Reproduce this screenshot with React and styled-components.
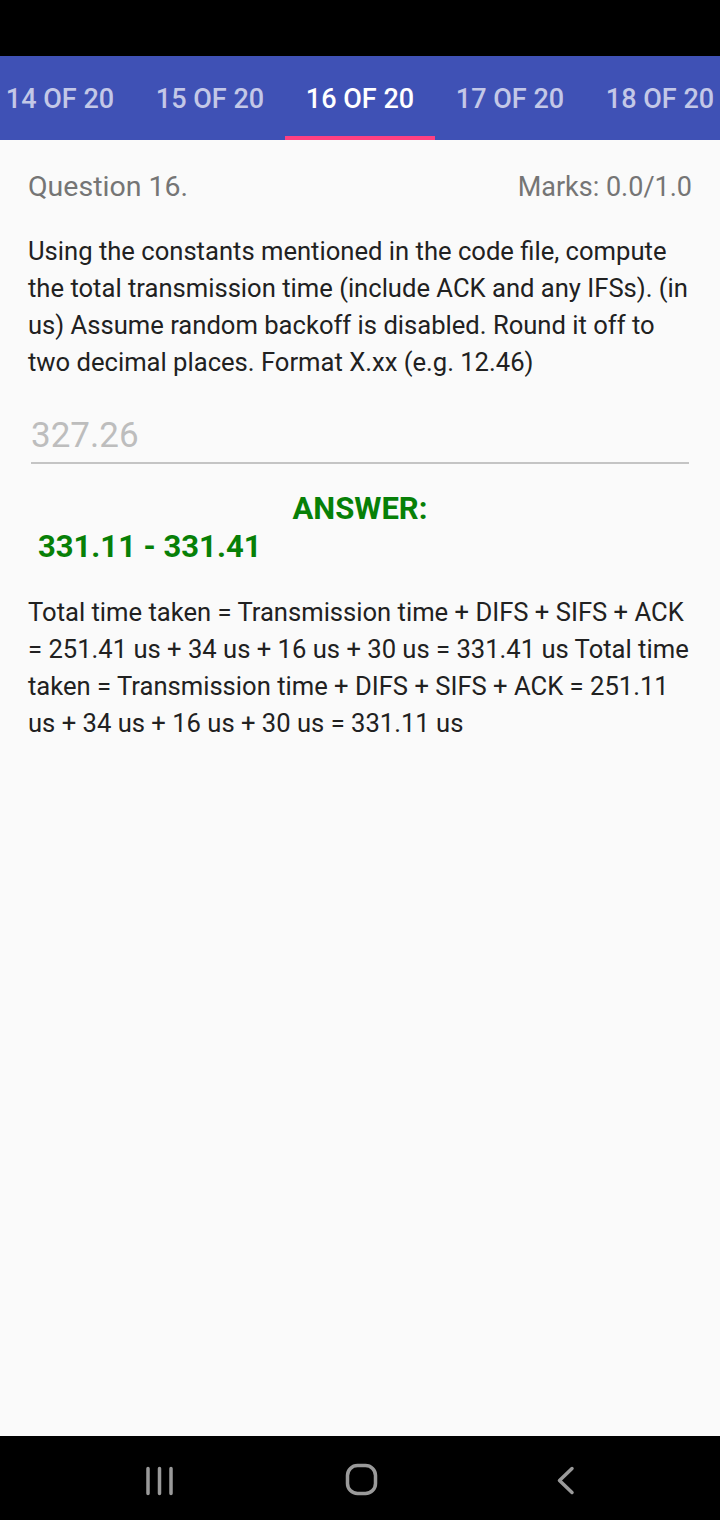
import React from "react";
import styled, { createGlobalStyle } from "styled-components";

const Global = createGlobalStyle`
  html, body {
    margin: 0;
    padding: 0;
    background: #000;
  }
  body {
    font-family: Roboto, "Noto Sans", sans-serif;
  }
`;

const Screen = styled.div`
  width: 720px;
  height: 1520px;
  display: flex;
  flex-direction: column;
  background: #fafafa;
`;

const StatusBar = styled.div`
  height: 56px;
  background: #000;
  flex-shrink: 0;
`;

const TabBar = styled.div`
  height: 84px;
  background: #3f51b5;
  display: flex;
  justify-content: center;
  overflow: hidden;
  flex-shrink: 0;
`;

const Tab = styled.div`
  position: relative;
  flex: 0 0 150px;
  display: flex;
  align-items: center;
  justify-content: center;
  font-size: 27px;
  font-weight: 500;
  color: ${(p) => (p.active ? "#ffffff" : "rgba(255,255,255,0.7)")};
  white-space: nowrap;
  padding-top: 2px;

  &::after {
    content: "";
    display: ${(p) => (p.active ? "block" : "none")};
    position: absolute;
    left: 0;
    right: 0;
    bottom: 0;
    height: 4px;
    background: #ff4081;
  }
`;

const Content = styled.div`
  flex: 1;
  padding: 28px 28px 0 28px;
  display: flex;
  flex-direction: column;
`;

const HeaderRow = styled.div`
  display: flex;
  justify-content: space-between;
  align-items: center;
  font-size: 27px;
  color: #757575;
  line-height: 38px;
`;

const Title = styled.span`
  font-size: 28.5px;
`;

const Body = styled.p`
  margin: 0;
  font-size: 25.6px;
  line-height: 37px;
  color: #212121;
  margin-top: ${(p) => p.top || 0}px;
`;

const Field = styled.div`
  margin: 32px 3px 0 3px;
  font-size: 35px;
  color: #bdbdbd;
  line-height: 46px;
  padding-bottom: 3px;
  border-bottom: 2px solid #c4c4c4;
`;

const AnswerLabel = styled.div`
  margin-top: 26px;
  text-align: center;
  font-size: 31px;
  font-weight: 700;
  color: #078007;
  line-height: 38px;
`;

const AnswerValue = styled.div`
  padding-left: 10px;
  font-size: 31px;
  font-weight: 700;
  color: #078007;
  line-height: 38px;
`;

const NavBar = styled.div`
  height: 84px;
  background: #000;
  display: flex;
  align-items: center;
  justify-content: space-between;
  padding: 4px 137px 0 140px;
  box-sizing: border-box;
  flex-shrink: 0;
`;

const NavIcon = styled.svg`
  width: 40px;
  height: 40px;
  stroke: #9a9a9a;
  fill: none;
  stroke-width: 3.5;
  stroke-linecap: round;
  stroke-linejoin: round;
`;

const tabs = ["14 OF 20", "15 OF 20", "16 OF 20", "17 OF 20", "18 OF 20"];

export default function App() {
  return (
    <>
      <Global />
      <Screen>
        <StatusBar />
        <TabBar>
          {tabs.map((t) => (
            <Tab key={t} active={t === "16 OF 20"}>
              {t}
            </Tab>
          ))}
        </TabBar>
        <Content>
          <HeaderRow>
            <Title>Question 16.</Title>
            <span>Marks: 0.0/1.0</span>
          </HeaderRow>
          <Body top={27}>
            Using the constants mentioned in the code file, compute the total
            transmission time (include ACK and any IFSs). (in us) Assume random
            backoff is disabled. Round it off to two decimal places. Format X.xx
            (e.g. 12.46)
          </Body>
          <Field>327.26</Field>
          <AnswerLabel>ANSWER:</AnswerLabel>
          <AnswerValue>331.11 - 331.41</AnswerValue>
          <Body top={28}>
            Total time taken = Transmission time + DIFS + SIFS + ACK = 251.41 us
            + 34 us + 16 us + 30 us = 331.41 us Total time taken = Transmission
            time + DIFS + SIFS + ACK = 251.11 us + 34 us + 16 us + 30 us = 331.11
            us
          </Body>
        </Content>
        <NavBar>
          <NavIcon viewBox="0 0 40 40">
            <path d="M8 8.5v25M19.5 8.5v25M31 8.5v25" />
          </NavIcon>
          <NavIcon viewBox="0 0 40 40">
            <rect x="5.5" y="5.5" width="28" height="28" rx="10" />
          </NavIcon>
          <NavIcon viewBox="0 0 40 40">
            <path d="M29 8.5L16.5 20.5L29 32.5" />
          </NavIcon>
        </NavBar>
      </Screen>
    </>
  );
}
